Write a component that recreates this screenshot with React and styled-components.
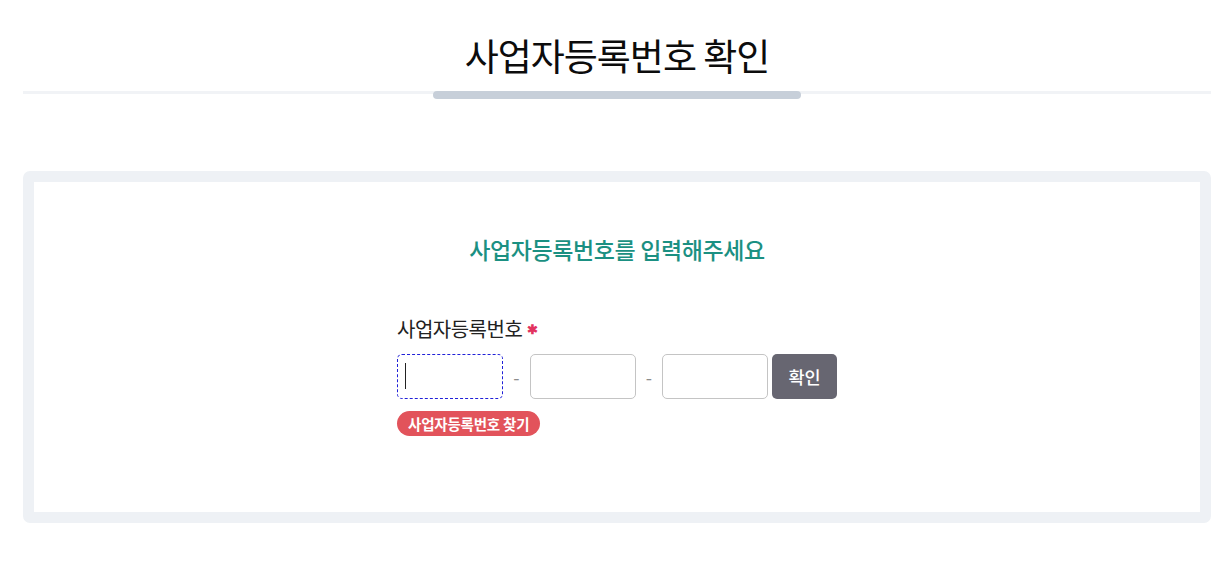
import React from 'react';
import styled, { createGlobalStyle } from 'styled-components';

const GlobalStyle = createGlobalStyle`
  body {
    margin: 0;
    background: #ffffff;
    font-family: "Noto Sans CJK KR", "Noto Sans", sans-serif;
  }
`

const Page = styled.div`
  padding: 0 12px 0 23px;
`

const Header = styled.div`
  display: flex;
  flex-direction: column;
  align-items: center;
  border-bottom: 3px solid #f1f3f6;
  height: 91px;
  position: relative;
`

const Title = styled.h1`
  margin: 30px 0 0;
  font-size: 37px;
  line-height: 50px;
  font-weight: 400;
  color: #0c0c0c;
  letter-spacing: -1px;
`

const TitleBar = styled.div`
  position: absolute;
  bottom: -8px;
  left: 50%;
  transform: translateX(-50%);
  width: 368px;
  height: 8px;
  border-radius: 4px;
  background: #c7cfd9;
`

const Card = styled.div`
  margin-top: 77px;
  border: 11px solid #eef1f5;
  border-radius: 7px;
  height: 352px;
  box-sizing: border-box;
  display: flex;
  flex-direction: column;
  align-items: center;
`

const Subtitle = styled.h2`
  margin: 52px 0 0;
  font-size: 23px;
  line-height: 30px;
  font-weight: 500;
  color: #1b9082;
  letter-spacing: -0.4px;
`

const Form = styled.div`
  margin-top: 52px;
  width: 440px;
  display: flex;
  flex-direction: column;
`

const Label = styled.label`
  font-size: 20px;
  line-height: 26px;
  color: #222;
  letter-spacing: -0.5px;
  display: flex;
  align-items: center;
  gap: 5px;
`

const Required = styled.span`
  color: #e2335f;
  font-size: 13px;
  font-weight: 700;
`

const Row = styled.div`
  margin-top: 12px;
  display: flex;
  align-items: center;
`

const Field = styled.div`
  position: relative;
`

const Input = styled.input`
  display: block;
  width: 106px;
  height: 45px;
  box-sizing: border-box;
  border: 1px ${p => (p.$focused ? 'dashed #2020d8' : 'solid #c4c4c4')};
  border-radius: 5px;
  font-size: 17px;
  padding: 0 8px;
  outline: none;
`

const Caret = styled.span`
  position: absolute;
  left: 8px;
  top: 9px;
  width: 1px;
  height: 26px;
  background: #222;
`

const Dash = styled.span`
  width: 27px;
  text-align: center;
  color: #8c8c8c;
  font-size: 18px;
`

const Button = styled.button`
  margin-left: 4px;
  width: 66px;
  height: 45px;
  border: none;
  border-radius: 5px;
  background: #676671;
  color: #fff;
  font-family: inherit;
  font-size: 17.5px;
  font-weight: 500;
`

const Badge = styled.span`
  margin-top: 12px;
  align-self: flex-start;
  background: #e2535b;
  color: #fff;
  font-size: 14.5px;
  font-weight: 700;
  line-height: 25px;
  padding: 0 11px;
  border-radius: 13px;
  letter-spacing: -0.2px;
`

export default function App() {
  return (
    <Page>
      <GlobalStyle />
      <Header>
        <Title>사업자등록번호 확인</Title>
        <TitleBar />
      </Header>
      <Card>
        <Subtitle>사업자등록번호를 입력해주세요</Subtitle>
        <Form>
          <Label>
            사업자등록번호<Required>✱</Required>
          </Label>
          <Row>
            <Field>
              <Input $focused />
              <Caret />
            </Field>
            <Dash>-</Dash>
            <Input />
            <Dash>-</Dash>
            <Input />
            <Button>확인</Button>
          </Row>
          <Badge>사업자등록번호 찾기</Badge>
        </Form>
      </Card>
    </Page>
  );
}
